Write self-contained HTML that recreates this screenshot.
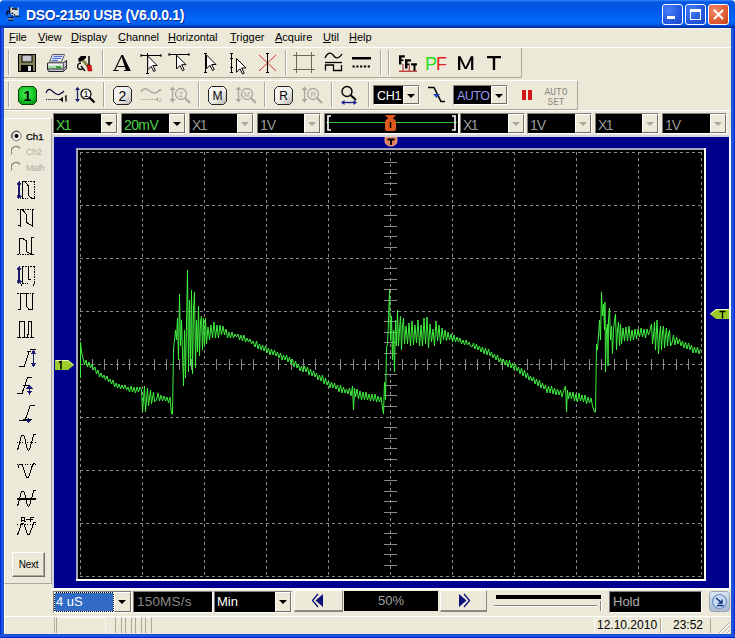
<!DOCTYPE html>
<html><head><meta charset="utf-8">
<style>
*{margin:0;padding:0;box-sizing:border-box}
html,body{width:735px;height:638px;overflow:hidden;background:#ECE9D8}
body{position:relative;font-family:"Liberation Sans",sans-serif;font-size:11px;color:#000}
.a{position:absolute}
.t{position:absolute;white-space:nowrap;line-height:1}
.sep{position:absolute;width:2px;border-left:1px solid #ACA899;border-right:1px solid #fff}
.cb{position:absolute;background:#000;border-top:1px solid #808080;border-left:1px solid #808080;border-right:1px solid #fff;border-bottom:1px solid #fff}
.dd{position:absolute;background:#ECE9D8;border-top:1px solid #fff;border-left:1px solid #fff;border-right:1px solid #716F64;border-bottom:1px solid #716F64}
.arr{position:absolute;width:0;height:0;border-left:4px solid transparent;border-right:4px solid transparent;border-top:4px solid #000}
.arrg{border-top-color:#ACA899}
</style></head><body>
<!-- desktop corners -->
<div class="a" style="left:0;top:0;width:735px;height:638px;background:#fff"></div>
<!-- title bar -->
<div class="a" style="left:0;top:0;width:735px;height:28px;border-radius:4px 4px 0 0;background:linear-gradient(to bottom,#3a8cff 0px,#1c6ef2 1px,#0458e0 2px,#0057e4 6px,#005ae8 12px,#0062f2 16px,#0068fb 20px,#0062f0 23px,#0056e2 25px,#0040c4 26px,#0030a4 27px)"></div>
<!-- frame -->
<div class="a" style="left:0;top:28px;width:4px;height:610px;background:linear-gradient(to right,#0020c0,#0838d8 1px,#2a5cf5 2px,#2050c8 3px)"></div>
<div class="a" style="left:731px;top:28px;width:4px;height:610px;background:linear-gradient(to left,#0020c0,#0838d8 1px,#2a5cf5 2px,#2050c8 3px)"></div>
<div class="a" style="left:0;top:634px;width:735px;height:4px;background:linear-gradient(to top,#0020c0,#0838d8 1px,#2a5cf5 2px,#2050c8 3px)"></div>
<!-- client -->
<div class="a" style="left:4px;top:28px;width:727px;height:606px;background:#ECE9D8"></div>
<!-- title icon -->
<svg class="a" style="left:0;top:0" width="24" height="24" viewBox="0 0 24 24">
<path d="M10 7 L17 8.5 L18.7 7.3 L18.7 16.5 L12.5 15.5 L10 13.5 Z" fill="#d4d8dc"/>
<path d="M18.3 7.5 L18.3 15" stroke="#a8d0f8" stroke-width="1"/>
<path d="M9.6 6.5 L9.6 14" stroke="#000820" stroke-width="1.4"/>
<path d="M12 8.7 L17.5 9.2" stroke="#000820" stroke-width="1.5"/>
<path d="M15 16.2 L19.5 16.2" stroke="#000820" stroke-width="1.2"/>
<path d="M8.5 11 Q5.5 12.5 7.5 15" stroke="#000820" stroke-width="1.4" fill="none"/>
<circle cx="12.3" cy="13.3" r="0.9" fill="#000820"/><circle cx="14.5" cy="14.8" r="0.8" fill="#000820"/>
<rect x="7.5" y="17.3" width="6.5" height="1.3" fill="#000820"/>
<rect x="7.5" y="18.6" width="6.5" height="1" fill="#e8f0ff"/>
<rect x="8" y="19.6" width="6" height="1.2" fill="#000820"/>
<path d="M12.5 15.5 L12.5 17.3" stroke="#000820" stroke-width="1"/>
</svg>
<div class="t" style="left:26px;top:8px;font-size:14px;font-weight:bold;color:#fff;letter-spacing:-0.3px;text-shadow:1px 1px 0 #0a2a9a">DSO-2150 USB (V6.0.0.1)</div>
<!-- title buttons -->
<div class="a" style="left:662px;top:4px;width:21px;height:21px;border:1px solid #fff;border-radius:3px;background:radial-gradient(circle at 30% 30%,#4a80f8,#2458e0 60%,#1c48c8)"></div>
<div class="a" style="left:667px;top:16px;width:8px;height:3px;background:#fff"></div>
<div class="a" style="left:685px;top:4px;width:21px;height:21px;border:1px solid #fff;border-radius:3px;background:radial-gradient(circle at 30% 30%,#4a80f8,#2458e0 60%,#1c48c8)"></div>
<div class="a" style="left:690px;top:9px;width:11px;height:11px;border:1px solid #fff;border-top-width:3px"></div>
<div class="a" style="left:708px;top:4px;width:21px;height:21px;border:1px solid #fff;border-radius:3px;background:radial-gradient(circle at 30% 30%,#f08a6a,#e05a32 60%,#c8401c)"></div>
<svg class="a" style="left:708px;top:4px" width="21" height="21"><path d="M6 6 L15 15 M15 6 L6 15" stroke="#fff" stroke-width="2"/></svg>
<!-- menu bar -->
<div class="a" style="left:4px;top:28px;width:727px;height:1px;background:#f4f6ff"></div>
<div class="t" style="left:9px;top:32px;font-size:11px"><u>F</u>ile</div>
<div class="t" style="left:38px;top:32px;font-size:11px"><u>V</u>iew</div>
<div class="t" style="left:71px;top:32px;font-size:11px"><u>D</u>isplay</div>
<div class="t" style="left:118px;top:32px;font-size:11px"><u>C</u>hannel</div>
<div class="t" style="left:168px;top:32px;font-size:11px"><u>H</u>orizontal</div>
<div class="t" style="left:230px;top:32px;font-size:11px"><u>T</u>rigger</div>
<div class="t" style="left:275px;top:32px;font-size:11px"><u>A</u>cquire</div>
<div class="t" style="left:323px;top:32px;font-size:11px"><u>U</u>til</div>
<div class="t" style="left:349px;top:32px;font-size:11px"><u>H</u>elp</div>
<!-- toolbar 1 frame -->
<div class="a" style="left:4px;top:47px;width:518px;height:31px;border-top:1px solid #fff;border-bottom:1px solid #ACA899;border-right:1px solid #ACA899"></div>
<div class="sep" style="left:8px;top:50px;height:25px"></div>
<div class="sep" style="left:102px;top:50px;height:25px"></div>
<div class="sep" style="left:285px;top:50px;height:25px"></div>
<div class="sep" style="left:380px;top:50px;height:25px"></div>
<div class="sep" style="left:388px;top:50px;height:25px"></div>
<div class="a" style="left:4px;top:47px;width:727px;height:1px;background:#fff"></div>
<!-- toolbar 2 frame -->
<div class="a" style="left:4px;top:80px;width:574px;height:30px;border-top:1px solid #fff;border-bottom:1px solid #ACA899;border-right:1px solid #ACA899"></div>
<div class="sep" style="left:8px;top:82px;height:25px"></div>
<div class="sep" style="left:103px;top:82px;height:25px"></div>
<div class="sep" style="left:198px;top:82px;height:25px"></div>
<div class="sep" style="left:264px;top:82px;height:25px"></div>
<div class="sep" style="left:331px;top:82px;height:25px"></div>
<div class="sep" style="left:368px;top:82px;height:25px"></div>
<div class="a" style="left:4px;top:110px;width:727px;height:1px;background:#fff"></div>
<!-- TB1 icons -->
<svg class="a" style="left:18px;top:54px" width="18" height="18" viewBox="0 0 18 18">
<rect x="0.5" y="0.5" width="17" height="17" fill="#84865a" stroke="#000"/>
<rect x="4" y="1" width="10" height="7" fill="#c4c4cc" stroke="#000"/>
<rect x="3" y="11" width="12" height="6.5" fill="#000"/>
<rect x="10" y="12" width="3" height="5" fill="#e0e0e8"/>
</svg>
<svg class="a" style="left:47px;top:54px" width="20" height="18" viewBox="0 0 20 18">
<path d="M5.5 0.5 L17.5 0.5 L14.5 8 L2.5 8 Z" fill="#f8f8fc" stroke="#303040" stroke-width="0.8"/>
<path d="M6.5 2.3 L15.5 2.3 M5.5 4.3 L14.5 4.3 M4.5 6.3 L11 6.3" stroke="#3050d0" stroke-width="1"/>
<path d="M0.5 9 L16 9 L19.5 6.5 L19.5 14.5 L16.5 17.5 L1.5 17.5 L0.5 15 Z" fill="#c4c4cc" stroke="#202028" stroke-width="1"/>
<rect x="1.5" y="9.5" width="14" height="2" fill="#f4f4f8"/>
<rect x="2" y="12.5" width="13" height="1.3" fill="#80f080"/>
<rect x="9" y="12.3" width="5" height="1.7" fill="#20a020"/>
<path d="M1 15 L16.5 15 L19.5 12" stroke="#303038" stroke-width="1" fill="none"/>
<path d="M16.5 9.5 L16.5 17" stroke="#606068" stroke-width="1"/>
</svg>
<svg class="a" style="left:77px;top:55px" width="17" height="17" viewBox="0 0 17 17">
<path d="M5 4 L13 14" stroke="#8a8a50" stroke-width="3"/>
<path d="M1 4 L4 1 L9 1 L9 3 L5 6 L2 7 Z" fill="#000"/>
<path d="M12 1 L12 10" stroke="#000" stroke-width="1.5"/>
<path d="M10 10 L14 10 L15 16 L11 16 Z" fill="#e01010" stroke="#800" stroke-width="0.5"/>
<path d="M4 8 C1 8 0 11 1 13 C2 15 5 15 6 13 M4 11 L8 16" fill="none" stroke="#000" stroke-width="1.3"/>
</svg>
<svg class="a" style="left:110px;top:52px" width="24" height="22" viewBox="0 0 24 22">
<path d="M11 3 L13 3 L20.5 18.5 L16 18.5 Z" fill="#000"/>
<path d="M11.5 4 L4.5 18.5 M7.5 14.5 L16 14.5 M3 18.5 L8.5 18.5 M14 18.5 L20.5 18.5" stroke="#000" stroke-width="1.1" fill="none"/>
</svg>
<svg class="a" style="left:140px;top:52px" width="160" height="24" viewBox="0 0 160 24" fill="none" stroke="#000" stroke-width="1">
<!-- icon2 -->
<path d="M1 3.5 L21 3.5 M1 2 L1 5 M21 2 L21 5 M7.5 1 L7.5 22 M6 21.5 L9 21.5"/>
<path d="M7.7 4.0 L7.7 17.8 L11.1 14.3 L13.7 19.5 L15.4 18.6 L12.9 13.5 L17.2 13.5 Z" fill="#fff"/>
<!-- icon3 -->
<path d="M29 2.5 L49 2.5 M29 1 L29 4 M49 1 L49 4"/>
<path d="M36.5 3.2 L36.5 17.0 L39.9 13.5 L42.5 18.7 L44.2 17.8 L41.7 12.7 L46.0 12.7 Z" fill="#fff"/>
<!-- icon4 -->
<path d="M65.5 1 L65.5 21 M64 1.5 L67 1.5 M64 20.5 L67 20.5"/>
<path d="M66.5 3.0 L66.5 16.8 L69.9 13.3 L72.5 18.5 L74.2 17.6 L71.7 12.5 L76.0 12.5 Z" fill="#fff"/>
<!-- icon5 -->
<path d="M91.5 1 L91.5 21 M90 1.5 L93 1.5 M90 20.5 L93 20.5 M90 6.5 L93 6.5 M90 15.5 L93 15.5"/>
<path d="M96.5 6.5 L96.5 20.3 L99.9 16.8 L102.5 22.0 L104.2 21.1 L101.7 16.0 L106.0 16.0 Z" fill="#fff"/>
<!-- icon6 -->
<path d="M119 3 L136 19 M136 3 L119 19" stroke="#e03030"/>
<path d="M127.5 1 L127.5 21 M126 1.5 L129 1.5 M126 20.5 L129 20.5"/>
</svg>
<!-- grid icon -->
<svg class="a" style="left:292px;top:51px" width="24" height="23" viewBox="0 0 24 23" stroke="#6a6a5a" stroke-width="1" fill="none">
<path d="M1 4.5 L23 4.5 M1 18.5 L23 18.5 M4.5 1 L4.5 22 M19.5 1 L19.5 22"/>
</svg>
<svg class="a" style="left:324px;top:52px" width="20" height="20" viewBox="0 0 20 20" stroke="#000" stroke-width="1.3" fill="none">
<path d="M1 6 C4 0 7 0 9.5 3.5 C12 7 15 7 18 2"/>
<path d="M1 10.5 L18 10.5"/>
<path d="M1.5 18.5 L1.5 13 L9.5 13 L9.5 18.5 L17.5 18.5 L17.5 13"/>
</svg>
<svg class="a" style="left:352px;top:55px" width="20" height="14" viewBox="0 0 20 14">
<rect x="0" y="2" width="19" height="2.5" fill="#000"/>
<path d="M0.5 11.5 L19 11.5" stroke="#000" stroke-width="2.2" stroke-dasharray="2.2 1.6"/>
</svg>
<!-- FFT -->
<svg class="a" style="left:397px;top:54px" width="22" height="19" viewBox="0 0 22 19">
<path d="M2 1.3 H7.8 V3.5 H4.5 V5.4 H6.5 V7 H4.5 V10.5 H2 Z" fill="#000"/>
<path d="M8 5.2 H14 V7.5 H10.5 V9.5 H12.5 V11 H10.5 V14.6 H8 Z" fill="#000"/>
<path d="M14.1 9.3 H19.9 V11.5 H18.5 V17 H16.5 V11.5 H14.1 Z" fill="#000"/>
<rect x="5.5" y="10" width="1" height="7" fill="#a02020"/>
<rect x="11.8" y="11" width="1" height="6" fill="#a02020"/>
<rect x="2" y="16.6" width="18" height="1.2" fill="#b02020"/>
</svg>
<div class="t" style="left:425px;top:55px;font-size:18px;color:#20e020">P</div>
<div class="t" style="left:436px;top:55px;font-size:18px;color:#e02020">F</div>
<svg class="a" style="left:456px;top:54px" width="48" height="18" viewBox="0 0 48 18">
<path d="M2 16 V2.3 H4.6 L9.7 13 L14.8 2.3 H17.3 V16 H15.1 V6 L10.8 15 H8.6 L4.3 6 V16 Z" fill="#000"/>
<path d="M31 2 H45 V4.3 H39.2 V16 H36.8 V4.3 H31 Z" fill="#000"/>
</svg>

<!-- TB2 icons -->
<svg class="a" style="left:18px;top:86px" width="19" height="19" viewBox="0 0 19 19">
<defs><radialGradient id="gg" cx="0.45" cy="0.4" r="0.6"><stop offset="0" stop-color="#50f060"/><stop offset="0.7" stop-color="#18c828"/><stop offset="1" stop-color="#0a9a18"/></radialGradient>
<linearGradient id="wg" x1="0" y1="0" x2="1" y2="1"><stop offset="0" stop-color="#ffffff"/><stop offset="0.6" stop-color="#e8e8e4"/><stop offset="1" stop-color="#b0b0a8"/></linearGradient></defs>
<path d="M3.5 0.5 L15.5 0.5 L18.5 3.5 L18.5 15.5 L15.5 18.5 L3.5 18.5 L0.5 15.5 L0.5 3.5 Z" fill="url(#gg)" stroke="#0a400a"/>
</svg>
<div class="t" style="left:23px;top:89px;font-size:14px;width:9px;text-align:center;font-weight:bold">1</div>
<svg class="a" style="left:45px;top:86px" width="24" height="17" viewBox="0 0 24 17" fill="none">
<path d="M1 7 C2.5 3.5 4 2.5 6 4 C8 5.5 10 8 12.5 8.5 C15 9 17 7 19 5" stroke="#101040" stroke-width="1.2"/>
<path d="M1 13.5 L15 13.5" stroke="#101040" stroke-width="1.1" stroke-dasharray="1.2 0.9"/>
<path d="M14.5 13.5 L18 10.8 L18 16.2 Z" fill="#000"/>
<path d="M20 10.5 L21 10 L21 15.5" stroke="#000" stroke-width="1.3"/>
</svg>
<svg class="a" style="left:74px;top:86px" width="23" height="18" viewBox="0 0 23 18" fill="none">
<path d="M3.5 2 L3.5 15" stroke="#202070" stroke-width="1.3"/>
<path d="M1 4 L3.5 0.8 L6 4 Z M1 13 L3.5 16.2 L6 13 Z" fill="#202070"/>
<circle cx="12" cy="8" r="5" stroke="#000" stroke-width="1.2" fill="#f4f4f0"/>
<path d="M15.5 11.5 L20.5 16.5" stroke="#000" stroke-width="2.2"/>
</svg>
<div class="t" style="left:83px;top:90px;font-size:9px;width:6px;text-align:center">1</div>
<!-- 2 button -->
<svg class="a" style="left:113px;top:86px" width="19" height="19" viewBox="0 0 19 19">
<path d="M3.5 0.5 L15.5 0.5 L18.5 3.5 L18.5 15.5 L15.5 18.5 L3.5 18.5 L0.5 15.5 L0.5 3.5 Z" fill="url(#wg)" stroke="#222"/>
</svg>
<div class="t" style="left:117px;top:89px;font-size:14px;width:11px;text-align:center">2</div>
<svg class="a" style="left:140px;top:86px" width="24" height="17" viewBox="0 0 24 17" fill="none">
<path d="M1 6 C3 2 6 2 9 4.5 C12 7 15 8 18 5.5 C19 4.5 20 4 21 3.5" stroke="#aaa89c" stroke-width="1.5"/>
<path d="M1 13.5 L16 13.5" stroke="#aaa89c" stroke-width="1.2" stroke-dasharray="1.2 1"/>
<path d="M15.5 13.5 L18 11.5 L18 15.5 Z" fill="#aaa89c"/>
<text x="18.5" y="16" font-size="6" fill="#aaa89c" font-family="Liberation Sans">2</text>
</svg>
<svg class="a" style="left:169px;top:86px" width="23" height="18" viewBox="0 0 23 18" fill="none">
<path d="M3.5 2 L3.5 15" stroke="#aaa89c" stroke-width="1.4"/>
<path d="M0.5 4 L3.5 0.5 L6.5 4 Z M0.5 13 L3.5 16.5 L6.5 13 Z" fill="#aaa89c"/>
<circle cx="12" cy="8" r="5.5" stroke="#aaa89c" stroke-width="1.3"/>
<path d="M16 12 L21 17" stroke="#aaa89c" stroke-width="2"/>
<text x="9.5" y="11" font-size="8" fill="#aaa89c" font-family="Liberation Sans">2</text>
</svg>
<!-- M button -->
<svg class="a" style="left:208px;top:86px" width="19" height="19" viewBox="0 0 19 19">
<path d="M3.5 0.5 L15.5 0.5 L18.5 3.5 L18.5 15.5 L15.5 18.5 L3.5 18.5 L0.5 15.5 L0.5 3.5 Z" fill="url(#wg)" stroke="#222"/>
</svg>
<div class="t" style="left:208px;top:90px;font-size:12px;width:19px;text-align:center">M</div>
<svg class="a" style="left:235px;top:86px" width="23" height="18" viewBox="0 0 23 18" fill="none">
<path d="M3.5 2 L3.5 15" stroke="#aaa89c" stroke-width="1.4"/>
<path d="M0.5 4 L3.5 0.5 L6.5 4 Z M0.5 13 L3.5 16.5 L6.5 13 Z" fill="#aaa89c"/>
<circle cx="12" cy="8" r="5.5" stroke="#aaa89c" stroke-width="1.3"/>
<path d="M16 12 L21 17" stroke="#aaa89c" stroke-width="2"/>
<text x="8.8" y="11" font-size="7.5" fill="#aaa89c" font-family="Liberation Sans">M</text>
</svg>
<!-- R button -->
<svg class="a" style="left:274px;top:86px" width="19" height="19" viewBox="0 0 19 19">
<path d="M3.5 0.5 L15.5 0.5 L18.5 3.5 L18.5 15.5 L15.5 18.5 L3.5 18.5 L0.5 15.5 L0.5 3.5 Z" fill="url(#wg)" stroke="#222"/>
</svg>
<div class="t" style="left:274px;top:90px;font-size:12px;width:19px;text-align:center">R</div>
<svg class="a" style="left:301px;top:86px" width="23" height="18" viewBox="0 0 23 18" fill="none">
<path d="M3.5 2 L3.5 15" stroke="#aaa89c" stroke-width="1.4"/>
<path d="M0.5 4 L3.5 0.5 L6.5 4 Z M0.5 13 L3.5 16.5 L6.5 13 Z" fill="#aaa89c"/>
<circle cx="12" cy="8" r="5.5" stroke="#aaa89c" stroke-width="1.3"/>
<path d="M16 12 L21 17" stroke="#aaa89c" stroke-width="2"/>
<text x="9.5" y="11" font-size="8" fill="#aaa89c" font-family="Liberation Sans">R</text>
</svg>
<!-- magnifier horiz -->
<svg class="a" style="left:340px;top:85px" width="18" height="21" viewBox="0 0 18 21" fill="none">
<circle cx="7" cy="6.5" r="5" stroke="#000" stroke-width="1.4"/>
<path d="M10.5 10 L16 15" stroke="#000" stroke-width="2"/>
<path d="M2 17.5 L16 17.5" stroke="#202090" stroke-width="1.4"/>
<path d="M1 17.5 L4.5 15 L4.5 20 Z M17 17.5 L13.5 15 L13.5 20 Z" fill="#202090"/>
</svg>
<!-- CH1 combo -->
<div class="cb" style="left:373px;top:85px;width:47px;height:20px"></div>
<div class="t" style="left:377px;top:90px;font-size:12.5px;color:#fff;letter-spacing:-0.3px">CH1</div>
<div class="dd" style="left:403px;top:86px;width:16px;height:18px"></div>
<div class="arr" style="left:407px;top:94px"></div>
<!-- slope -->
<svg class="a" style="left:427px;top:86px" width="19" height="18" viewBox="0 0 19 18" fill="none">
<path d="M1 1.5 L7 1.5 L14 15.5 L18 15.5" stroke="#000" stroke-width="1.6"/>
<path d="M6 8 L13 8 L9.5 12 Z" fill="#2040c0"/>
</svg>
<!-- AUTO combo -->
<div class="cb" style="left:453px;top:85px;width:55px;height:20px"></div>
<div class="t" style="left:457px;top:90px;font-size:12.5px;color:#9898f0;letter-spacing:-0.5px">AUTO</div>
<div class="dd" style="left:491px;top:86px;width:16px;height:18px"></div>
<div class="arr" style="left:495px;top:94px"></div>
<!-- pause -->
<div class="a" style="left:522px;top:90px;width:4px;height:10px;background:#d01818"></div>
<div class="a" style="left:528px;top:90px;width:4px;height:10px;background:#d01818"></div>
<div class="t" style="left:544px;top:87px;font-family:'Liberation Mono',monospace;font-size:9.5px;color:#8a887e;width:24px;text-align:center;line-height:9px;transform:scaleY(1.15);transform-origin:top">AUTO<br>SET</div>
<!-- channel row combos -->
<div class="cb" style="left:53px;top:113px;width:65px;height:21px"></div>
<div class="t" style="left:56px;top:118px;font-size:14px;color:#4cd04c;letter-spacing:-1.6px">X1</div>
<div class="dd" style="left:101px;top:114px;width:16px;height:19px"></div>
<div class="arr" style="left:105px;top:122px"></div>
<div class="cb" style="left:121px;top:113px;width:65px;height:21px"></div>
<div class="t" style="left:124px;top:118px;font-size:14px;color:#4cd04c;letter-spacing:-0.6px">20mV</div>
<div class="dd" style="left:169px;top:114px;width:16px;height:19px"></div>
<div class="arr" style="left:173px;top:122px"></div>
<div class="cb" style="left:189px;top:113px;width:65px;height:21px"></div>
<div class="t" style="left:192px;top:118px;font-size:14px;color:#9a9a9a;letter-spacing:-1.6px">X1</div>
<div class="dd" style="left:237px;top:114px;width:16px;height:19px"></div>
<div class="arr arrg" style="left:241px;top:122px"></div>
<div class="cb" style="left:257px;top:113px;width:64px;height:21px"></div>
<div class="t" style="left:260px;top:118px;font-size:14px;color:#9a9a9a;letter-spacing:-1px">1V</div>
<div class="dd" style="left:304px;top:114px;width:16px;height:19px"></div>
<div class="arr arrg" style="left:308px;top:122px"></div>
<!-- trigger position box -->
<div class="cb" style="left:324px;top:113px;width:135px;height:21px"></div>
<div class="a" style="left:326px;top:122px;width:131px;height:1px;background:#30c030"></div>
<svg class="a" style="left:326px;top:114px" width="131" height="19" viewBox="0 0 131 19" fill="none" stroke="#fff" stroke-width="1.6">
<path d="M5 2 L2 2 L2 16 L5 16 M126 2 L129 2 L129 16 L126 16"/>
</svg>
<svg class="a" style="left:384px;top:114px" width="13" height="18" viewBox="0 0 13 18">
<path d="M1 1 L12 1 L8.5 5 L4.5 5 Z" fill="#e05a20"/>
<path d="M3 5 L10 5 Q12 6 12 9 L12 15 Q12 17 10 17 L3 17 Q1 17 1 15 L1 9 Q1 6 3 5 Z" fill="#e05a20"/>
<path d="M6.5 8 L6.5 14" stroke="#000" stroke-width="1.5"/>
</svg>
<div class="cb" style="left:460px;top:113px;width:65px;height:21px"></div>
<div class="t" style="left:463px;top:118px;font-size:14px;color:#9a9a9a;letter-spacing:-1.6px">X1</div>
<div class="dd" style="left:508px;top:114px;width:16px;height:19px"></div>
<div class="arr arrg" style="left:512px;top:122px"></div>
<div class="cb" style="left:527px;top:113px;width:65px;height:21px"></div>
<div class="t" style="left:530px;top:118px;font-size:14px;color:#9a9a9a;letter-spacing:-1px">1V</div>
<div class="dd" style="left:575px;top:114px;width:16px;height:19px"></div>
<div class="arr arrg" style="left:579px;top:122px"></div>
<div class="cb" style="left:595px;top:113px;width:64px;height:21px"></div>
<div class="t" style="left:598px;top:118px;font-size:14px;color:#9a9a9a;letter-spacing:-1.6px">X1</div>
<div class="dd" style="left:642px;top:114px;width:16px;height:19px"></div>
<div class="arr arrg" style="left:646px;top:122px"></div>
<div class="cb" style="left:662px;top:113px;width:65px;height:21px"></div>
<div class="t" style="left:665px;top:118px;font-size:14px;color:#9a9a9a;letter-spacing:-1px">1V</div>
<div class="dd" style="left:710px;top:114px;width:16px;height:19px"></div>
<div class="arr arrg" style="left:714px;top:122px"></div>
<!-- left panel -->
<div class="a" style="left:4px;top:118px;width:48px;height:466px;border-top:1px solid #fff;border-left:1px solid #fff;border-right:1px solid #ACA899;border-bottom:1px solid #ACA899"></div>
<!-- blue panel -->
<div class="a" style="left:52px;top:135px;width:679px;height:455px;background:#fff"></div>
<div class="a" style="left:52px;top:135px;width:677px;height:453px;background:#d4d4dc"></div>
<div class="a" style="left:54px;top:137px;width:675px;height:451px;background:#00008e"></div>
<!-- display -->
<div class="a" style="left:76px;top:148px;width:630px;height:433px;background:#fff"></div>
<div class="a" style="left:76px;top:148px;width:628px;height:431px;background:#a8a8b8"></div>
<div class="a" style="left:78px;top:150px;width:626px;height:429px;background:#000"></div>
<!-- graticule -->
<svg class="a" style="left:0;top:0" width="735" height="638" viewBox="0 0 735 638" shape-rendering="crispEdges">
<path d="M80.5 152 L80.5 577 M142.5 152 L142.5 577 M204.5 152 L204.5 577 M266.5 152 L266.5 577 M328.5 152 L328.5 577 M390.5 152 L390.5 577 M452.5 152 L452.5 577 M514.5 152 L514.5 577 M576.5 152 L576.5 577 M638.5 152 L638.5 577 M701.5 152 L701.5 577" stroke="#8a8a8a" stroke-width="1" stroke-dasharray="3 3" fill="none"/>
<path d="M80 152.5 L702 152.5 M80 205.5 L702 205.5 M80 258.5 L702 258.5 M80 311.5 L702 311.5 M80 364.5 L702 364.5 M80 417.5 L702 417.5 M80 470.5 L702 470.5 M80 523.5 L702 523.5 M80 576.5 L702 576.5" stroke="#8a8a8a" stroke-width="1" stroke-dasharray="3 3" fill="none"/>
<path d="M92.5 359 L92.5 370 M104.5 359 L104.5 370 M117.5 359 L117.5 370 M129.5 359 L129.5 370 M154.5 359 L154.5 370 M166.5 359 L166.5 370 M179.5 359 L179.5 370 M191.5 359 L191.5 370 M216.5 359 L216.5 370 M229.5 359 L229.5 370 M241.5 359 L241.5 370 M253.5 359 L253.5 370 M278.5 359 L278.5 370 M291.5 359 L291.5 370 M303.5 359 L303.5 370 M315.5 359 L315.5 370 M340.5 359 L340.5 370 M353.5 359 L353.5 370 M365.5 359 L365.5 370 M378.5 359 L378.5 370 M402.5 359 L402.5 370 M415.5 359 L415.5 370 M427.5 359 L427.5 370 M440.5 359 L440.5 370 M465.5 359 L465.5 370 M477.5 359 L477.5 370 M489.5 359 L489.5 370 M502.5 359 L502.5 370 M527.5 359 L527.5 370 M539.5 359 L539.5 370 M551.5 359 L551.5 370 M564.5 359 L564.5 370 M589.5 359 L589.5 370 M601.5 359 L601.5 370 M614.5 359 L614.5 370 M626.5 359 L626.5 370 M651.5 359 L651.5 370 M663.5 359 L663.5 370 M676.5 359 L676.5 370 M688.5 359 L688.5 370 M384 162.5 L397 162.5 M384 173.5 L397 173.5 M384 183.5 L397 183.5 M384 194.5 L397 194.5 M384 215.5 L397 215.5 M384 226.5 L397 226.5 M384 236.5 L397 236.5 M384 247.5 L397 247.5 M384 268.5 L397 268.5 M384 279.5 L397 279.5 M384 289.5 L397 289.5 M384 300.5 L397 300.5 M384 321.5 L397 321.5 M384 332.5 L397 332.5 M384 342.5 L397 342.5 M384 353.5 L397 353.5 M384 374.5 L397 374.5 M384 385.5 L397 385.5 M384 395.5 L397 395.5 M384 406.5 L397 406.5 M384 427.5 L397 427.5 M384 438.5 L397 438.5 M384 448.5 L397 448.5 M384 459.5 L397 459.5 M384 480.5 L397 480.5 M384 491.5 L397 491.5 M384 501.5 L397 501.5 M384 512.5 L397 512.5 M384 533.5 L397 533.5 M384 544.5 L397 544.5 M384 554.5 L397 554.5 M384 565.5 L397 565.5" stroke="#8a8a8a" stroke-width="1" fill="none"/>
</svg>
<!-- waveform -->
<svg class="a" style="left:0;top:0" width="735" height="638" viewBox="0 0 735 638"><path d="M80.5 378 L80.5 342 L81.5 352 L82.5 356 L83.5 360 L84.5 365 L86.0 360 L87.5 367 L89.0 362 L90.5 368 L92.0 364 L93.5 370 L95.0 367 L96.5 374 L98.0 370 L99.5 377 L101.0 373 L102.5 378 L104.0 375 L105.5 380 L107.0 376 L108.5 382 L110.0 379 L111.5 384 L113.0 380 L114.5 387 L116.0 383 L117.5 388 L119.0 384 L120.5 389 L122.0 385 L123.5 389 L125.0 385 L126.5 390 L128.0 387 L129.5 392 L131.0 386 L132.5 392 L134.0 387 L135.5 393 L137.0 387 L138.5 392 L140.0 387 L141.5 390 L142.5 412 L144.5 386 L145.5 412 L147.5 388 L148.5 406 L150.5 390 L151.5 404 L153.5 392 L154.5 402 L156.5 400 L158.0 393 L159.5 401 L161.0 395 L162.5 401 L164.0 396 L165.5 401 L167.0 397 L168.5 403 L170.0 397 L171.5 414 L172.5 414 L173.5 350 L175.5 330 L176.5 340 L177.5 318 L178.5 360 L179.5 294 L180.5 346 L181.5 320 L183.5 386 L184.5 330 L185.5 378 L187.5 270 L188.5 372 L189.5 300 L190.5 366 L191.5 290 L192.5 374 L193.5 310 L194.5 292 L195.5 368 L196.5 320 L197.5 352 L198.5 306 L199.5 356 L200.5 322 L201.5 316 L202.5 350 L203.5 318 L204.5 346 L205.5 318 L206.5 344 L208.0 327 L209.5 340 L211.0 325 L212.5 338 L214.0 322 L215.5 338 L217.0 325 L218.5 338 L220.0 325 L221.5 335 L223.0 326 L224.5 335 L226.0 329 L227.5 338 L229.0 332 L230.5 338 L232.0 332 L233.5 338 L235.0 334 L236.5 337 L238.0 334 L239.5 340 L241.0 335 L242.5 341 L244.0 335 L245.5 342 L247.0 338 L248.5 342 L250.0 339 L251.5 344 L253.0 341 L255.0 347 L256.5 341 L258.0 349 L259.5 344 L261.0 350 L262.5 345 L264.0 351 L265.5 346 L267.0 353 L268.5 348 L270.0 355 L271.5 349 L273.0 355 L274.5 350 L276.0 356 L277.5 352 L279.0 358 L280.5 353 L282.0 360 L283.5 355 L285.0 360 L286.5 355 L288.0 362 L289.5 357 L291.0 364 L292.5 359 L294.0 367 L295.5 361 L297.0 368 L298.5 364 L300.0 371 L301.5 366 L303.0 372 L304.5 366 L306.0 372 L307.5 367 L309.0 375 L310.5 369 L312.0 376 L313.5 371 L315.0 377 L316.5 373 L318.0 380 L319.5 375 L321.0 381 L322.5 375 L324.0 384 L325.5 378 L327.0 385 L328.5 381 L330.0 388 L331.5 382 L333.0 388 L334.5 383 L336.0 389 L337.5 385 L339.0 392 L340.5 385 L342.0 393 L343.5 387 L345.0 393 L346.5 389 L348.0 394 L349.5 388 L351.0 396 L352.5 386 L353.5 410 L354.5 388 L355.5 397 L357.0 389 L358.5 399 L360.0 391 L361.5 400 L363.0 392 L364.5 400 L366.0 392 L367.5 400 L369.0 394 L370.5 401 L372.0 394 L373.5 401 L375.0 394 L376.5 402 L378.0 396 L379.5 402 L381.0 397 L382.5 408 L383.5 414 L384.5 382 L385.5 400 L386.5 348 L387.5 344 L388.5 320 L389.5 290 L390.5 340 L391.5 316 L392.5 360 L393.5 330 L394.5 372 L395.5 320 L396.5 346 L397.5 310 L398.5 346 L399.5 330 L400.5 316 L401.5 350 L402.5 326 L403.5 318 L404.5 344 L406.0 326 L407.5 344 L409.0 323 L410.5 346 L412.0 321 L413.5 345 L415.0 325 L416.5 343 L418.0 320 L419.5 346 L421.0 325 L422.5 346 L424.0 318 L425.5 344 L427.0 317 L428.5 348 L430.0 324 L431.5 342 L433.0 329 L434.5 346 L436.0 321 L437.5 341 L439.0 325 L440.5 344 L442.0 328 L443.5 340 L445.0 330 L446.5 341 L448.0 332 L449.5 340 L451.0 334 L452.5 342 L454.0 335 L455.5 342 L457.0 337 L458.5 342 L460.0 338 L461.5 344 L463.0 340 L464.5 345 L466.0 340 L467.5 345 L469.0 342 L470.5 346 L472.0 347 L473.5 343 L475.0 349 L476.5 344 L478.0 350 L479.5 346 L481.0 352 L482.5 347 L484.0 354 L485.5 348 L487.0 355 L488.5 349 L490.0 356 L491.5 352 L493.0 358 L494.5 354 L496.0 360 L497.5 355 L499.0 362 L500.5 358 L502.0 364 L503.5 359 L505.0 365 L506.5 360 L508.0 367 L509.5 360 L511.0 368 L512.5 363 L514.0 370 L515.5 364 L517.0 371 L518.5 367 L520.0 374 L521.5 368 L523.0 376 L524.5 370 L526.0 378 L527.5 373 L529.0 380 L530.5 376 L532.0 381 L533.5 377 L535.0 384 L536.5 379 L538.0 386 L539.5 380 L541.0 388 L542.5 383 L544.0 389 L545.5 385 L547.0 393 L548.5 386 L550.0 393 L551.5 386 L553.0 394 L554.5 388 L556.0 395 L557.5 389 L559.0 395 L560.5 390 L562.0 397 L563.5 391 L565.5 386 L566.5 412 L567.5 390 L568.5 399 L570.0 392 L571.5 399 L573.0 392 L574.5 401 L576.0 394 L577.5 402 L579.0 393 L580.5 401 L582.0 395 L583.5 402 L585.0 395 L586.5 404 L588.0 397 L589.5 403 L591.0 398 L592.5 406 L594.5 412 L595.5 412 L596.5 344 L597.5 350 L598.5 336 L599.5 320 L600.5 340 L601.5 292 L602.5 316 L603.5 304 L604.5 330 L605.0 302 L605.5 372 L606.5 330 L607.5 324 L608.0 366 L608.5 320 L609.5 308 L610.5 340 L611.5 326 L612.5 354 L613.5 330 L614.5 320 L615.5 314 L616.5 350 L617.5 330 L618.5 322 L619.5 346 L620.5 324 L621.5 344 L623.0 328 L624.5 341 L626.0 327 L627.5 341 L629.0 326 L630.5 341 L632.0 330 L633.5 340 L635.0 329 L636.5 339 L638.0 329 L639.5 337 L641.0 328 L642.5 337 L644.0 329 L645.5 338 L647.0 329 L648.5 335 L650.0 330 L651.5 324 L652.5 344 L653.5 336 L654.5 322 L655.5 350 L656.5 330 L657.0 320 L658.5 354 L659.5 336 L660.5 326 L661.5 350 L662.5 332 L663.5 326 L664.5 348 L665.5 336 L666.5 328 L667.5 346 L668.5 334 L669.5 330 L670.5 346 L672.0 343 L673.5 335 L675.0 345 L676.5 337 L678.0 344 L679.5 339 L681.0 346 L682.5 341 L684.0 348 L685.5 342 L687.0 349 L688.5 343 L690.0 350 L691.5 345 L693.0 353 L694.5 347 L696.0 353 L697.5 347 L699.0 354 L700.5 349" fill="none" stroke="#40f040" stroke-width="1" stroke-linejoin="bevel"/></svg>
<!-- radios -->
<svg class="a" style="left:11px;top:130px" width="12" height="45" viewBox="0 0 12 45">
<defs><linearGradient id="rg" x1="0" y1="0" x2="1" y2="1"><stop offset="0" stop-color="#dcdcd4"/><stop offset="1" stop-color="#ffffff"/></linearGradient></defs>
<circle cx="5.5" cy="6" r="4.7" fill="url(#rg)" stroke="#7a7a70" stroke-width="1"/>
<path d="M1.5 8.5 A4.7 4.7 0 0 1 8 2" stroke="#5a5a50" stroke-width="1.2" fill="none"/>
<circle cx="5.5" cy="6" r="2" fill="#000"/>
<path d="M1 24 A4.7 4.7 0 0 1 9 18.5" stroke="#8a8a7a" stroke-width="1.4" fill="none"/>
<path d="M1 40 A4.7 4.7 0 0 1 9 34.5" stroke="#8a8a7a" stroke-width="1.4" fill="none"/>
</svg>
<div class="t" style="left:26px;top:132px;font-size:9.5px;letter-spacing:0px;-webkit-text-stroke:0.25px #000">Ch1</div>
<div class="t" style="left:26px;top:148px;font-size:9px;color:#b0aea0;letter-spacing:-0.3px">Ch2</div>
<div class="t" style="left:26px;top:164px;font-size:9px;color:#b0aea0;letter-spacing:-0.4px">Math</div>
<!-- trigger icons -->
<svg class="a" style="left:14px;top:176px" width="26" height="362" viewBox="0 0 26 362" fill="none" stroke="#000" stroke-width="1" shape-rendering="crispEdges">
<!-- 1: y 180.5-199 => local 4.5-23 -->
<g transform="translate(0,4)">
<path d="M5.2 1.5 L5.2 18" stroke="#1a1a70" stroke-width="1.8"/>
<path d="M3 4 L5.2 0.5 L7.4 4 Z M3 15.5 L5.2 19 L7.4 15.5 Z" fill="#1a1a70" stroke="#1a1a70" stroke-width="0.8"/>
<path d="M8 19 L8 1 L10.5 1 L14.5 6 L14.5 15.5 L18 18.5 L20.5 18.5"/>
<path d="M11 1 L20.5 1 M20.5 1 L20.5 18.5 M8 18.5 L14 18.5" stroke-dasharray="1.5 1"/>
</g>
<!-- 2: y 209-226.5 => local 33 -->
<g transform="translate(0,33)">
<path d="M3 0.5 L21 0.5" stroke-dasharray="1.5 1"/>
<path d="M4.5 16.5 L6 17 L6 0.5 L8 0.5 L12.7 5.5 L12.7 13.5 L18.4 17 L18.4 0.5"/>
</g>
<!-- 3: y 237.5-255 => local 61 -->
<g transform="translate(0,61)">
<path d="M5.6 17 L5.6 1 L7.8 1 L12.2 3.5 L12.2 14.5 L17 17 L17 1 L19.7 0.5"/>
<path d="M3 17 L21 17" stroke-dasharray="1.5 1"/>
</g>
<!-- 4 -->
<g transform="translate(0,89)">
<path d="M5.2 1.5 L5.2 18" stroke="#1a1a70" stroke-width="1.8"/>
<path d="M3 4 L5.2 0.5 L7.4 4 Z M3 15.5 L5.2 19 L7.4 15.5 Z" fill="#1a1a70" stroke="#1a1a70" stroke-width="0.8"/>
<path d="M7 21 L8 19 L8 1 L10 1 M14 1 L14 14 L17 14 M20.5 18.5 L19 21"/>
<path d="M11 1 L20.5 1 M20.5 1 L20.5 18.5 M8 18.5 L14 18.5" stroke-dasharray="1.5 1"/>
</g>
<!-- 5 -->
<g transform="translate(0,116.5)">
<path d="M3 0.5 L21 0.5" stroke-dasharray="1.5 1"/>
<path d="M4.5 16.5 L6 17 L6 0.5 L8 0.5 L12.5 0.5 L12.5 13.5 L15 17 L18.4 17 L18.4 0.5"/>
</g>
<!-- 6 -->
<g transform="translate(0,144.5)">
<path d="M5.6 17 L5.6 1 L7.8 1 L10 1 L10 17 L13 17 L14 14 L14 1 L17 1 L17 17 L19.7 17"/>
<path d="M3 17 L21 17" stroke-dasharray="1.5 1"/>
</g>
<!-- 7: -->
<g transform="translate(0,172.5)">
<path d="M5 18 L10 18 L15.5 2.5 L17 2.5 M13 2.5 L17 2.5 M15.5 1 L21.5 1"/>
<path d="M19.5 3 L19.5 17" stroke="#1a1a70"/>
<path d="M17.5 5 L19.5 2 L21.5 5 Z M17.5 15 L19.5 18 L21.5 15 Z" fill="#1a1a70" stroke="#1a1a70"/>
</g>
<!-- 8: -->
<g transform="translate(0,200)">
<path d="M3.3 17.5 L8 17.5 L13 3 Q13.5 1 15 1 L18.4 1 M9 9 L16.4 9"/>
<path d="M15.5 10 L15.5 17" stroke="#1a1a70"/>
<path d="M13.5 15 L15.5 18 L17.5 15 Z M13.5 12 L15.5 9.5 L17.5 12 Z" fill="#1a1a70" stroke="#1a1a70"/>
</g>
<!-- 9: -->
<g transform="translate(0,227.5)">
<path d="M4.6 17 L11 17 L16.4 1.5 L21 1.5 M9 15.5 L18 15.5"/>
<path d="M14.5 14 L14.5 18" stroke="#1a1a70"/>
<path d="M12.5 16.5 L14.5 19 L16.5 16.5 Z" fill="#1a1a70" stroke="#1a1a70"/>
</g>
<!-- 10: y 433-451 => local 257 -->
<g transform="translate(0,257)">
<path d="M3.5 17.5 L7 4 Q8.5 0 10.5 4 L13 15 Q14.5 19 16 15 L19 4 Q19.5 1 21.5 1"/>
<path d="M3 9.5 L22 9.5" stroke-dasharray="1.2 1.3"/>
</g>
<!-- 11: y 461-477 => local 285 -->
<g transform="translate(0,285)">
<path d="M4 7 Q4.5 3 7 3.5 L8.5 4 L12 15 Q13.5 18 15 15 L18.5 4 Q19.5 2 21.5 3.5"/>
<path d="M3 3.5 L22 3.5" stroke-dasharray="1.2 1.3"/>
</g>
<!-- 12: y 489-507 => local 313 -->
<g transform="translate(0,313)">
<path d="M3.5 17.5 L7 4 Q8.5 0 10.5 4 L13 15 Q14.5 19 16 15 L19 4 Q19.5 1 21.5 1"/>
<path d="M3 10 L22 10" stroke-width="1.4"/>
</g>
<!-- 13: y 517-535 => local 341 -->
<g transform="translate(0,341)">
<path d="M3.5 18 L7 8 Q8.5 4 10.5 8 L13 16 Q14.5 19 16 16 L19 8 Q19.5 5 21.5 5"/>
<path d="M3 7 L22 7" stroke-dasharray="1.2 1.3"/>
<path d="M7.5 5 L7.5 0.5 L10 0.5 Q11.5 1.5 10 3 L7.5 3 M10 3 L11.5 5 M12 2.5 L15.5 2.5 M16.5 5 L16.5 0.5 L20 0.5 M16.5 2.5 L19 2.5" stroke-width="1"/>
</g>
</svg>
<!-- Next button -->
<div class="a" style="left:12px;top:552px;width:33px;height:25px;background:#ECE9D8;border-top:1px solid #fff;border-left:1px solid #fff;border-right:1px solid #716F64;border-bottom:1px solid #716F64;box-shadow:inset -1px -1px 0 #ACA899"></div>
<div class="t" style="left:12px;top:560px;width:33px;text-align:center;font-size:10px;letter-spacing:-0.3px">Next</div>
<!-- markers -->
<svg class="a" style="left:55px;top:360px" width="20" height="11" viewBox="0 0 20 11">
<path d="M0 0 L13 0 L19 5 L13 10 L0 10 Z" fill="#9ccc28"/>
<path d="M0.5 0.5 L13 0.5 L18.5 5" stroke="#f0ffc0" stroke-width="1" fill="none"/>
<path d="M4 2.5 L6 1.5 L6 9.5" stroke="#000" stroke-width="1.5" fill="none"/>
</svg>
<svg class="a" style="left:709px;top:309px" width="20" height="11" viewBox="0 0 20 11">
<path d="M20 0 L7 0 L1 5 L7 10 L20 10 Z" fill="#9ccc28"/>
<path d="M19.5 0.5 L7 0.5 L1.5 5" stroke="#f0ffc0" stroke-width="1" fill="none"/>
<path d="M10.5 2.5 L16.5 2.5 M13.5 2.5 L13.5 9.5" stroke="#000" stroke-width="1.3" fill="none"/>
</svg>
<svg class="a" style="left:384px;top:137px" width="14" height="10" viewBox="0 0 14 10">
<path d="M1 0 L13 0 L13 5 Q13 7 9 9 L5 9 Q1 7 1 5 Z" fill="#e08058" stroke="#f0b090" stroke-width="0.8"/>
<path d="M3.5 2.5 L10.5 2.5 M7 2.5 L7 8" stroke="#000" stroke-width="2"/>
</svg>
<!-- bottom row -->
<div class="cb" style="left:53px;top:591px;width:79px;height:22px;background:#316ac5"></div>
<div class="a" style="left:54px;top:592px;width:60px;height:20px;border:1px dotted #fff;background:#000"></div>
<div class="a" style="left:55px;top:593px;width:58px;height:18px;background:#316ac5"></div>
<div class="t" style="left:56px;top:595px;font-size:13px;color:#fff">4 uS</div>
<div class="dd" style="left:114px;top:592px;width:17px;height:20px"></div>
<div class="arr" style="left:118px;top:600px"></div>
<div class="cb" style="left:133px;top:591px;width:80px;height:22px"></div>
<div class="t" style="left:137px;top:595px;font-size:13.5px;color:#8a8a8a;letter-spacing:0.2px">150MS/s</div>
<div class="cb" style="left:214px;top:591px;width:78px;height:22px"></div>
<div class="t" style="left:217px;top:595px;font-size:13px;color:#fff">Min</div>
<div class="dd" style="left:275px;top:592px;width:16px;height:20px"></div>
<div class="arr" style="left:279px;top:600px"></div>
<div class="a" style="left:294px;top:590px;width:49px;height:22px;background:#ECE9D8;border-top:1px solid #fff;border-left:1px solid #fff;border-right:1px solid #8a887c;border-bottom:2px solid #8a887c"></div>
<svg class="a" style="left:311px;top:593px" width="14" height="15" viewBox="0 0 14 15"><path d="M12 1 L12 14 L4.5 7.5 Z" fill="#10107a"/><path d="M7 1 L1.5 7.5 L7 14" stroke="#10107a" stroke-width="1.3" fill="none"/></svg>
<div class="cb" style="left:343px;top:590px;width:96px;height:22px;border:1px solid #ECE9D8"></div>
<div class="t" style="left:343px;top:594px;width:96px;text-align:center;font-size:13px;color:#a0a0a0">50%</div>
<div class="a" style="left:440px;top:590px;width:47px;height:22px;background:#ECE9D8;border-top:1px solid #fff;border-left:1px solid #fff;border-right:1px solid #8a887c;border-bottom:2px solid #8a887c"></div>
<svg class="a" style="left:458px;top:593px" width="14" height="15" viewBox="0 0 14 15"><path d="M1 1 L1 14 L8.5 7.5 Z" fill="#10107a"/><path d="M6 1 L11.5 7.5 L6 14" stroke="#10107a" stroke-width="1.3" fill="none"/></svg>
<!-- slider -->
<div class="a" style="left:496px;top:595px;width:105px;height:4px;background:#000"></div>
<div class="a" style="left:494px;top:605px;width:103px;height:2px;background:#8a887c;border-bottom:1px solid #fff"></div>
<div class="a" style="left:600px;top:601px;width:2px;height:10px;background:#8a887c;border-right:1px solid #fff"></div>
<!-- hold -->
<div class="cb" style="left:609px;top:591px;width:93px;height:22px"></div>
<div class="t" style="left:613px;top:595px;font-size:13px;color:#b0b0b0">Hold</div>
<svg class="a" style="left:709px;top:591px" width="21" height="21" viewBox="0 0 21 21">
<defs><linearGradient id="ib" x1="0" y1="0" x2="0" y2="1"><stop offset="0" stop-color="#dce6f4"/><stop offset="1" stop-color="#a8b8d0"/></linearGradient></defs>
<rect x="0.5" y="0.5" width="20" height="20" rx="3" fill="url(#ib)" stroke="#98a4b8"/>
<circle cx="10.5" cy="10.5" r="7" fill="#c8daf4" stroke="#6a8cc8" stroke-width="1.2"/>
<path d="M7 7 L13 12 M13 8.5 L13 12 L9.5 12 M8 14.5 L14.5 14.5" stroke="#10307a" stroke-width="1.4" fill="none"/>
</svg>
<!-- status bar -->
<div class="a" style="left:4px;top:616px;width:727px;height:1px;background:#fff"></div>
<div class="a" style="left:54px;top:617px;width:1px;height:16px;background:#b8b4a4"></div>
<div class="a" style="left:56px;top:617px;width:50px;height:16px;border-left:1px solid #ACA899;border-top:1px solid #f8f8f0;border-right:1px solid #f8f8f0"></div>
<div class="a" style="left:115px;top:617px;width:7px;height:16px;border-left:1px solid #ACA899;border-right:1px solid #ACA899;border-top:1px solid #f8f8f0"></div><div class="a" style="left:125px;top:617px;width:7px;height:16px;border-left:1px solid #ACA899;border-right:1px solid #ACA899;border-top:1px solid #f8f8f0"></div><div class="a" style="left:135px;top:617px;width:7px;height:16px;border-left:1px solid #ACA899;border-right:1px solid #ACA899;border-top:1px solid #f8f8f0"></div><div class="a" style="left:145px;top:617px;width:7px;height:16px;border-left:1px solid #ACA899;border-right:1px solid #ACA899;border-top:1px solid #f8f8f0"></div>
<div class="a" style="left:594px;top:618px;width:67px;height:15px;border-right:1px solid #ACA899;border-left:1px solid #fff"></div>
<div class="t" style="left:597px;top:619px;font-size:12px">12.10.2010</div>
<div class="a" style="left:661px;top:618px;width:50px;height:15px;border-right:1px solid #ACA899;border-left:1px solid #fff"></div>
<div class="t" style="left:673px;top:619px;font-size:12px">23:52</div>
<svg class="a" style="left:714px;top:617px" width="17" height="17" viewBox="0 0 17 17"><path d="M16 5 L5 16 M16 9 L9 16 M16 13 L13 16" stroke="#b0ac9c" stroke-width="1"/><path d="M16 6 L6 16 M16 10 L10 16 M16 14 L14 16" stroke="#fff" stroke-width="1"/></svg>
<div class="a" style="left:4px;top:584px;width:1px;height:50px;background:#fff"></div>
</body></html>
